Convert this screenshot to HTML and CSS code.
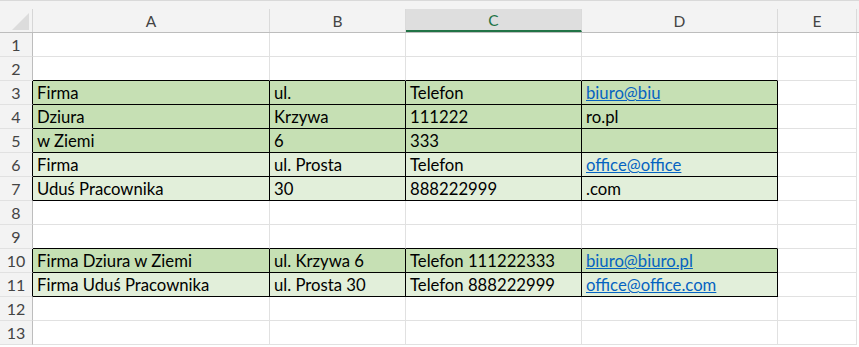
FILE: index.html
```html
<!DOCTYPE html>
<html lang="pl">

<head>
    <meta charset="UTF-8">
    <title>Arkusz</title>
    <link rel="stylesheet" href="styles.css">
</head>

<body>
    <div class="sheet">
        <div class="row head">
            <div class="corner">
                <svg width="17" height="17" viewBox="0 0 17 17"><polygon points="17,0 17,17 0,17" fill="#dcdcdc"/></svg>
            </div>
            <div class="col">A</div>
            <div class="col">B</div>
            <div class="col active">C</div>
            <div class="col">D</div>
            <div class="col">E</div>
        </div>

        <div class="row">
            <div class="rh">1</div>
            <div class="c"></div><div class="c"></div><div class="c"></div><div class="c"></div><div class="c"></div>
        </div>
        <div class="row">
            <div class="rh">2</div>
            <div class="c bb"></div><div class="c bb"></div><div class="c bb"></div><div class="c bb"></div><div class="c"></div>
        </div>
        <div class="row">
            <div class="rh rb">3</div>
            <div class="c b g1">Firma</div><div class="c b g1">ul.</div><div class="c b g1">Telefon</div><div class="c b g1"><a href="#">biuro@biu</a></div><div class="c"></div>
        </div>
        <div class="row">
            <div class="rh rb">4</div>
            <div class="c b g1">Dziura</div><div class="c b g1">Krzywa</div><div class="c b g1">111222</div><div class="c b g1">ro.pl</div><div class="c"></div>
        </div>
        <div class="row">
            <div class="rh rb">5</div>
            <div class="c b g1">w Ziemi</div><div class="c b g1">6</div><div class="c b g1">333</div><div class="c b g1"></div><div class="c"></div>
        </div>
        <div class="row">
            <div class="rh rb">6</div>
            <div class="c b g2">Firma</div><div class="c b g2">ul. Prosta</div><div class="c b g2">Telefon</div><div class="c b g2"><a href="#">office@office</a></div><div class="c"></div>
        </div>
        <div class="row">
            <div class="rh rb">7</div>
            <div class="c b g2">Uduś Pracownika</div><div class="c b g2">30</div><div class="c b g2">888222999</div><div class="c b g2">.com</div><div class="c"></div>
        </div>
        <div class="row">
            <div class="rh">8</div>
            <div class="c"></div><div class="c"></div><div class="c"></div><div class="c"></div><div class="c"></div>
        </div>
        <div class="row">
            <div class="rh">9</div>
            <div class="c bb"></div><div class="c bb"></div><div class="c bb"></div><div class="c bb"></div><div class="c"></div>
        </div>
        <div class="row">
            <div class="rh rb">10</div>
            <div class="c b g1">Firma Dziura w Ziemi</div><div class="c b g1">ul. Krzywa 6</div><div class="c b g1">Telefon 111222333</div><div class="c b g1"><a href="#">biuro@biuro.pl</a></div><div class="c"></div>
        </div>
        <div class="row">
            <div class="rh rb">11</div>
            <div class="c b g2">Firma Uduś Pracownika</div><div class="c b g2">ul. Prosta 30</div><div class="c b g2">Telefon 888222999</div><div class="c b g2"><a href="#">office@office.com</a></div><div class="c"></div>
        </div>
        <div class="row">
            <div class="rh">12</div>
            <div class="c"></div><div class="c"></div><div class="c"></div><div class="c"></div><div class="c"></div>
        </div>
        <div class="row">
            <div class="rh">13</div>
            <div class="c"></div><div class="c"></div><div class="c"></div><div class="c"></div><div class="c"></div>
        </div>
    </div>
</body>

</html>
```

FILE: styles.css
```css
body {
    margin: 0;
    background: #fff;
    font-family: Lato, "Liberation Sans", sans-serif;
    color: #000;
}

.sheet {
    width: 859px;
}

.row {
    display: grid;
    grid-template-columns: 33px 237px 136px 176px 196px 79px;
    height: 24px;
}

.head {
    height: 33px;
    background: #f3f3f3;
    border-top: 1px solid #d9d9d9;
    border-bottom: 1px solid #bdbdbd;
    box-sizing: border-box;
}

.corner {
    display: flex;
    align-items: flex-end;
    justify-content: flex-end;
    padding: 0 3px 2px 0;
    border-right: 1px solid #d6d6d6;
    margin-top: 8px;
}

.col {
    margin-top: 8px;
    display: flex;
    align-items: center;
    justify-content: center;
    border-right: 1px solid #dadada;
    color: #444;
    font-size: 15.5px;
    box-sizing: border-box;
}

.col.active {
    background: #dedede;
    color: #217346;
    border-bottom: 2px solid #217346;
}

.rh {
    background: #f3f3f3;
    border-right: 1px solid #bdbdbd;
    border-bottom: 1px solid #e1e1e1;
    display: flex;
    align-items: center;
    justify-content: center;
    color: #444;
    font-size: 16px;
}

.rh.rb {
    border-right-color: #000;
}

.c {
    border-right: 1px solid #e1e1e1;
    border-bottom: 1px solid #e1e1e1;
    padding: 0 0 1px 4px;
    display: flex;
    align-items: flex-end;
    font-size: 16.7px;
    white-space: nowrap;
    overflow: hidden;
}

.c.bb {
    border-bottom-color: #000;
}

.c.b {
    border-right-color: #000;
    border-bottom-color: #000;
}

.g1 {
    background: #c6e0b4;
}

.g2 {
    background: #e2efda;
}

.c a {
    color: #0563c1;
    text-decoration: underline;
}
```
